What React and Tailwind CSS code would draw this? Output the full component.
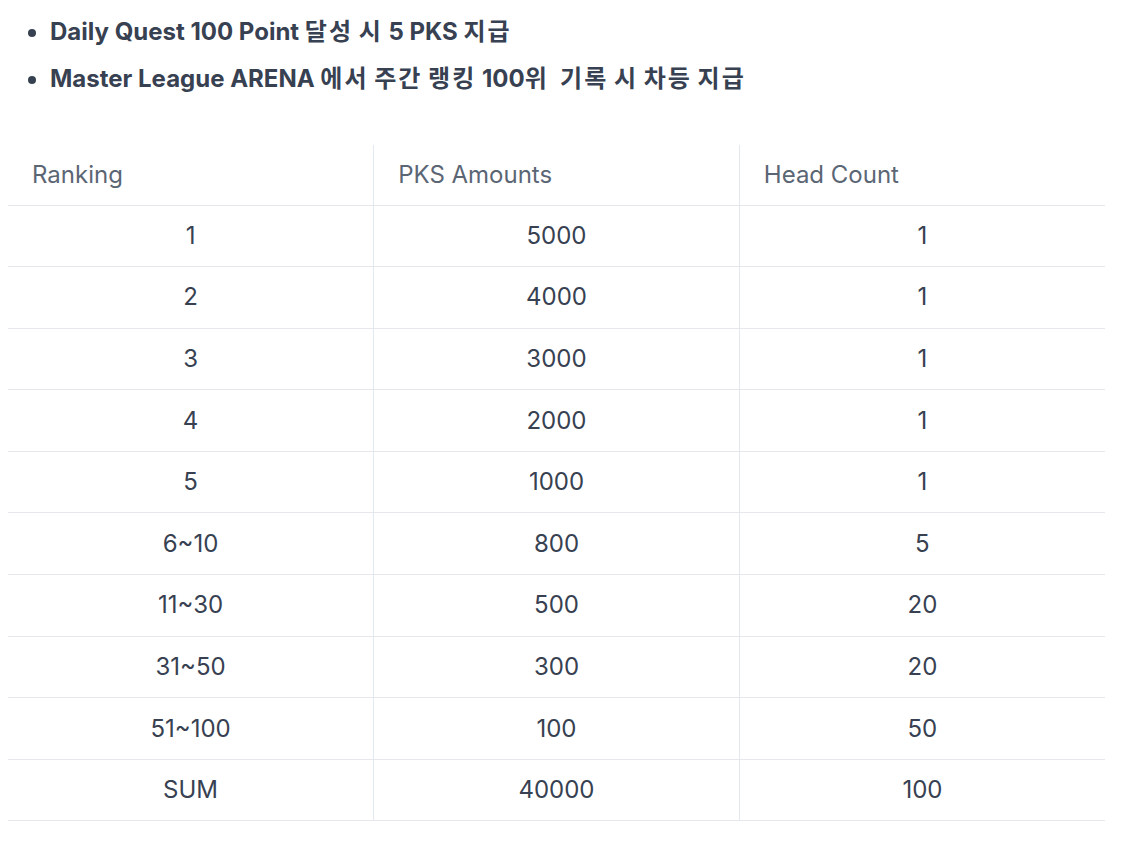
const rows = [
  ["1", "5000", "1"],
  ["2", "4000", "1"],
  ["3", "3000", "1"],
  ["4", "2000", "1"],
  ["5", "1000", "1"],
  ["6~10", "800", "5"],
  ["11~30", "500", "20"],
  ["31~50", "300", "20"],
  ["51~100", "100", "50"],
  ["SUM", "40000", "100"],
];

// korean glyphs run a little wider in the original, spaces don't
const Ko = ({ text }) =>
  text.split(/(\s+)/).map((part, i) =>
    /^\s+$/.test(part) ? part : <span key={i} className="tracking-[2px]">{part}</span>
  );

export default function App() {
  return (
    <div className="min-h-screen bg-white px-2 pt-[8px] font-['Inter','Noto_Sans_CJK_KR',sans-serif] text-[#374151]">
      <ul className="list-disc pl-[42px] text-[24px] font-bold leading-[47px] marker:text-[#374151]">
        <li>Daily Quest 100 Point <Ko text="달성 시" /> 5 PKS <Ko text="지급" /></li>
        <li className="whitespace-pre">Master League ARENA <Ko text="에서 주간 랭킹" /> 100<Ko text="위  기록 시 차등 지급" /></li>
      </ul>

      <table className="mt-[43px] w-[1097px] table-fixed border-collapse text-[24px]">
        <thead>
          <tr>
            <th className="h-[60px] border-r border-[#e2e8f0] px-6 text-left font-normal text-[#5b6675]">Ranking</th>
            <th className="h-[60px] border-r border-[#e2e8f0] px-6 text-left font-normal text-[#5b6675]">PKS Amounts</th>
            <th className="h-[60px] px-6 text-left font-normal text-[#5b6675]">Head Count</th>
          </tr>
        </thead>
        <tbody>
          {rows.map((r, i) => (
            <tr key={i} className="border-t border-[#e5e7eb] last:border-b">
              <td className="h-[61.6px] border-r border-[#e2e8f0] text-center">{r[0]}</td>
              <td className="h-[61.6px] border-r border-[#e2e8f0] text-center">{r[1]}</td>
              <td className="h-[61.6px] text-center">{r[2]}</td>
            </tr>
          ))}
        </tbody>
      </table>
    </div>
  );
}
